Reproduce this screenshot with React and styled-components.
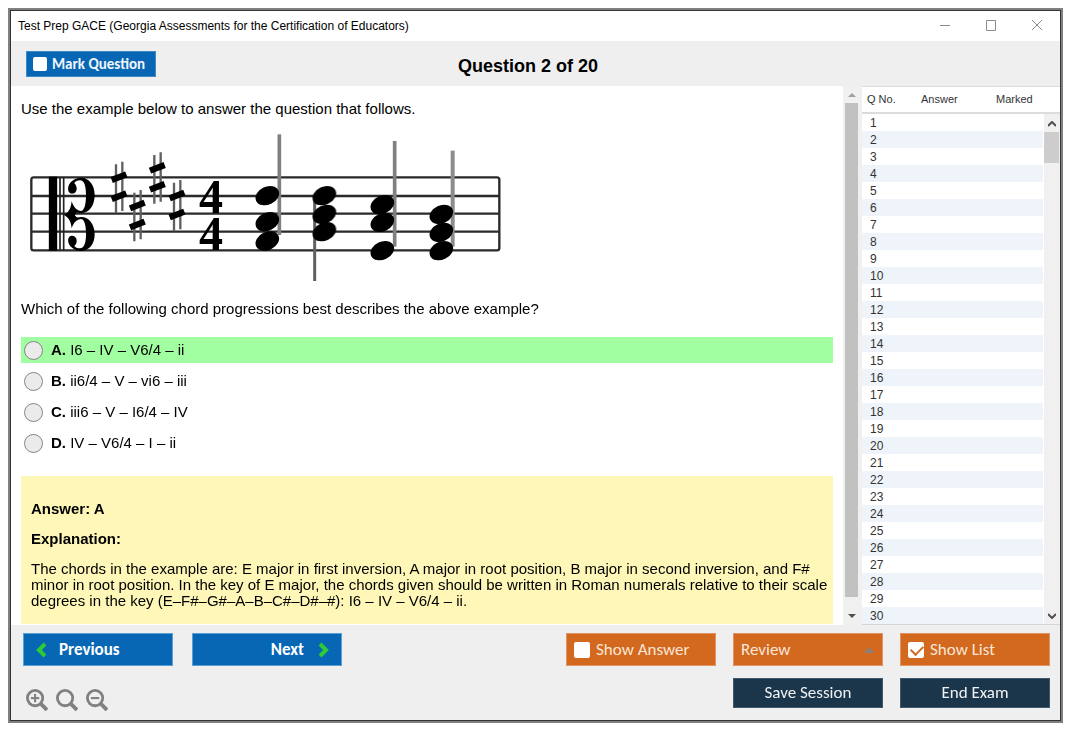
import React from 'react'
import styled, { createGlobalStyle } from "styled-components";

const GlobalStyle = createGlobalStyle`
  * {
    box-sizing: border-box;
  }

  body {
    margin: 0;
    background-color: #ffffff;
    color: #000000;
    font-family: "Liberation Sans", Arial, sans-serif;
    font-size: 15px;
    line-height: 16px;
  }

  button,
  input {
    margin: 0;
    font-family: inherit;
  }
`;

const Page = styled.div`
  display: flex;
  min-height: 100vh;
  padding: 8px 12px 12px 8px;
`;

const AppWindow = styled.div`
  flex: 1;
  min-width: 0;
  display: flex;
  flex-direction: column;
  border: 2px solid #808080;
  outline: 1px solid #333333;
  outline-offset: -3px;
  padding: 1px;
  background-color: #efefef;
`;

const TitleBar = styled.header`
  display: flex;
  align-items: center;
  justify-content: space-between;
  height: 30px;
  padding-left: 7px;
  background-color: #ffffff;
  font-size: 12px;
`;

const WindowButtons = styled.div`
  display: flex;
`;

const WindowButton = styled.button`
  display: flex;
  align-items: center;
  justify-content: center;
  width: 46px;
  height: 28px;
  padding: 0;
  border: 0;
  background: none;
`;

const QuestionBar = styled.div`
  display: grid;
  grid-template-columns: 1fr auto 1fr;
  align-items: center;
  height: 45px;
  padding: 0 30px 0 15px;
`;

const QuestionTitle = styled.h1`
  margin: 0;
  padding-top: 4px;
  font-size: 18px;
  line-height: 20px;
`;

const MarkToggle = styled.label`
  display: flex;
  align-items: center;
  justify-self: start;
  gap: 5px;
  width: 130px;
  height: 26px;
  padding: 0 6px;
  border: 1px solid #3f8ac6;
  background-color: #0867b5;
  color: #f2f6fa;
  font-family: Carlito, Lato, sans-serif;
  font-size: 15px;
  font-weight: 700;
  white-space: nowrap;
`;

const CheckBox = styled.input`
  appearance: none;
  flex: none;
  position: relative;
  width: ${(props) => props.$size}px;
  height: ${(props) => props.$size}px;
  border-radius: 2px;
  background-color: #ffffff;

  &:checked::after {
    content: "";
    position: absolute;
    left: 3px;
    top: 3px;
    width: 10px;
    height: 6px;
    border-left: 2px solid #d2691e;
    border-bottom: 2px solid #d2691e;
    transform: rotate(-45deg);
  }
`;

const Main = styled.main`
  flex: 1;
  display: flex;
  align-items: stretch;
`;

const Content = styled.section`
  flex: 1;
  min-width: 0;
  display: flex;
  flex-direction: column;
  padding: 15px 10px 1px;
  background-color: #ffffff;
`;

const Text = styled.p`
  margin: 0;
`;

const Score = styled.svg`
  display: block;
  width: 500px;
  max-width: 100%;
  height: 165px;
  margin: 8px 0 11px;
`;

const Options = styled.fieldset`
  display: flex;
  flex-direction: column;
  gap: 5px;
  min-width: 0;
  margin: 20px 0;
  padding: 0;
  border: 0;
`;

const Option = styled.label`
  display: flex;
  align-items: center;
  gap: 8px;
  height: 26px;
  padding-left: 3px;
  background-color: ${(props) => (props.$correct ? "#a1ffa1" : "transparent")};
`;

const Radio = styled.input`
  appearance: none;
  width: 19px;
  height: 19px;
  border: 1px solid #858585;
  border-radius: 50%;
  background-color: #ebebeb;

  &:checked {
    box-shadow: inset 0 0 0 4px #ebebeb;
    background-color: #333333;
  }
`;

const AnswerBox = styled.div`
  flex: 1;
  display: flex;
  flex-direction: column;
  gap: 14px;
  padding: 25px 4px 13px 10px;
  background-color: #fef7b8;
`;

const ContentScroll = styled.div`
  display: flex;
  flex-direction: column;
  align-items: center;
  flex: none;
  width: 19px;
  padding: 7px 4px 7px 2px;
  background-color: #f0f0f0;
`;

const ContentThumb = styled.div`
  flex: 1;
  align-self: stretch;
  margin: 6px 0 17px;
  background-color: #c1c1c1;
`;

const ListPanel = styled.aside`
  position: relative;
  flex: none;
  width: 198px;
  border-bottom: 1px solid #d5d5d5;
  background-color: #ffffff;
`;

const ListTable = styled.table`
  width: 100%;
  border-collapse: separate;
  border-spacing: 0;
  table-layout: fixed;
  color: #333333;
  font-size: 12px;
  line-height: 15px;

  th {
    height: 28px;
    padding: 0 0 1px 5px;
    border-top: 1px solid #dcdcdc;
    border-bottom: 2px solid #dcdcdc;
    font-size: 11px;
    font-weight: 400;
    text-align: left;
  }

  td {
    height: 17px;
    padding: 2px 0 0 8px;
  }

  tbody tr:nth-child(even) {
    background-color: #eef4f9;
  }
`;

const ListScroll = styled.div`
  position: absolute;
  top: 28px;
  right: 0;
  bottom: 0;
  display: flex;
  flex-direction: column;
  align-items: center;
  width: 17px;
  border-left: 1px solid #ffffff;
  background-color: #f0f0f0;
`;

const ListThumb = styled.div`
  align-self: stretch;
  height: 31px;
  margin: 5px 1px auto 0;
  background-color: #cdcdcd;
`;

const ScrollArrow = styled.svg`
  display: block;
  flex: none;
  margin: ${(props) => props.$margin || "0"};
`;

const Footer = styled.footer`
  display: flex;
  flex-direction: column;
  gap: 12px;
  padding: 8px 10px 12px 12px;
`;

const FooterRow = styled.div`
  display: flex;
  align-items: flex-start;
  justify-content: space-between;
`;

const ButtonGroup = styled.div`
  display: flex;
  gap: ${(props) => props.$gap || 17}px;
`;

const FooterButton = styled.button`
  display: flex;
  align-items: center;
  justify-content: ${(props) => props.$justify || "center"};
  gap: ${(props) => props.$gap || 6}px;
  width: 150px;
  height: ${(props) => props.$height || 33}px;
  padding: 0 ${(props) => props.$pad || 7}px;
  border: 1px solid ${(props) => props.$border};
  background-color: ${(props) => props.$color};
  color: ${(props) => props.$text || "#ffffff"};
  font-family: Carlito, Lato, sans-serif;
  font-size: 17px;
  font-weight: ${(props) => (props.$bold ? 700 : 400)};
  line-height: 20px;
  white-space: nowrap;
`;

const ZoomTools = styled.div`
  display: flex;
  gap: 8px;
  height: 30px;
  padding: 11px 0 0 3px;
`;

const ZoomButton = styled.button`
  display: flex;
  width: 22px;
  height: 22px;
  padding: 0;
  border: 0;
  background: none;
`;

const BLUE = { $color: "#0867b5", $border: "#5b9fd3", $bold: true };
const ORANGE = { $color: "#d2691e", $border: "#de9561", $text: "#fbe6d8" };
const NAVY = { $color: "#1b354a", $border: "#41586a", $text: "#f0f2f4", $height: 30 };

const options = [
  { letter: "A", text: "I6 – IV – V6/4 – ii", correct: true },
  { letter: "B", text: "ii6/4 – V – vi6 – iii" },
  { letter: "C", text: "iii6 – V – I6/4 – IV" },
  { letter: "D", text: "IV – V6/4 – I – ii" },
];

const rows = Array.from({ length: 30 }, (_, i) => i + 1);

const sharps = [[312, 185], [367, 270], [427, 157], [486, 240]];

// stem: [x, top, bottom, width, color]
const chords = [
  { x: 757, heads: [212, 290, 348], stem: [793, 28, 330, 11, "#808080"] },
  { x: 928, heads: [212, 268, 320], stem: [899, 212, 468, 9, "#606060"] },
  { x: 1102, heads: [239, 292, 377], stem: [1139, 48, 365, 11, "#808080"] },
  { x: 1279, heads: [268, 322, 377], stem: [1313, 77, 365, 12, "#8c8c8c"] },
];

function MusicScore() {
  return (
    <Score viewBox="18 0 1500 495" role="img" aria-label="Four chords on a staff in alto clef">
      <defs>
        <filter id="soft" x="-5%" y="-5%" width="110%" height="110%">
          <feGaussianBlur stdDeviation="2" />
        </filter>
      </defs>
      <g filter="url(#soft)">
        <rect x="49" y="157" width="1404" height="219" rx="7" fill="none" stroke="#2a2a2a" strokeWidth="7" />
        <path d="M49 213H1453M49 266H1453M49 320H1453" stroke="#2a2a2a" strokeWidth="7" />
        <path d="M114 155V377" stroke="#000000" strokeWidth="25" />
        <path d="M135 157V376M146 157V376" stroke="#222222" strokeWidth="5" />
        <path d="M146 270C160 264 168 250 170 228C175 246 186 257 199 258C209 255 213 236 213 210C213 184 208 166 195 166C187 166 180 170 178 175C184 181 187 189 184 197C180 207 167 209 161 200C154 182 170 159 198 158C224 158 239 182 239 209C239 242 222 264 199 264C191 264 187 262 184 264L179 270L184 276C187 279 192 276 199 276C222 276 239 298 239 328C239 355 224 378 198 378C170 377 154 354 161 338C167 329 180 331 184 341C187 349 184 357 178 363C181 368 187 370 195 370C208 370 213 352 213 328C213 301 209 285 199 282C186 283 175 292 170 310C168 288 160 276 146 270Z" fill="#000000" />
        {sharps.map(([x, y]) => (
          <g key={x}>
            <path d={`M${x - 9} ${y - 67}V${y + 79}M${x + 10} ${y - 75}V${y + 73}`} stroke="#606060" strokeWidth="7" />
            <path d={`M${x - 22} ${y - 20}L${x + 22} ${y - 37}M${x - 22} ${y + 37}L${x + 22} ${y + 20}`} stroke="#000000" strokeWidth="19" />
          </g>
        ))}
        <g fontFamily="Liberation Serif, serif" fontSize="144" fontWeight="700" textAnchor="middle">
          <text x="588" y="265">4</text>
          <text x="588" y="376">4</text>
        </g>
        {chords.map(({ x, heads, stem }) => (
          <g key={x}>
            <path d={`M${stem[0]} ${stem[1]}V${stem[2]}`} stroke={stem[4]} strokeWidth={stem[3]} />
            {heads.map((y) => (
              <ellipse key={y} cx={x} cy={y} rx="37" ry="27" transform={`rotate(-25 ${x} ${y})`} />
            ))}
          </g>
        ))}
      </g>
    </Score>
  )
}

function Chevron({ right }) {
  return (
    <svg width="10" height="16" viewBox="0 0 10 16" fill="none" stroke="#2ecc33" strokeWidth="4">
      <path d={right ? "M1 2L7 8L1 14" : "M9 2L3 8L9 14"} />
    </svg>
  )
}

function Magnifier({ sign }) {
  return (
    <svg width="22" height="22" viewBox="0 0 63 63" fill="none" stroke="#808080">
      <circle cx="26" cy="26" r="22" strokeWidth="8" />
      <path d="M42 42L60 60" strokeWidth="11" />
      {sign && <path d="M14 26H38" strokeWidth="6" />}
      {sign === "plus" && <path d="M26 14V38" strokeWidth="6" />}
    </svg>
  )
}

export default function App() {
  return (
    <Page>
      <GlobalStyle />
      <AppWindow>
        <TitleBar>
          <span>Test Prep GACE (Georgia Assessments for the Certification of Educators)</span>
          <WindowButtons>
            <WindowButton aria-label="Minimize">
              <svg width="12" height="12" stroke="#8a8a8a"><path d="M1 5.5H11" /></svg>
            </WindowButton>
            <WindowButton aria-label="Maximize">
              <svg width="12" height="12" stroke="#8a8a8a" fill="none"><path d="M1.5 0.5H10.5V10.5H1.5Z" /></svg>
            </WindowButton>
            <WindowButton aria-label="Close">
              <svg width="12" height="12" stroke="#8a8a8a"><path d="M1 0L11 10M11 0L1 10" /></svg>
            </WindowButton>
          </WindowButtons>
        </TitleBar>

        <QuestionBar>
          <MarkToggle>
            <CheckBox type="checkbox" $size={14} />
            Mark Question
          </MarkToggle>
          <QuestionTitle>Question 2 of 20</QuestionTitle>
        </QuestionBar>

        <Main>
          <Content>
            <Text>Use the example below to answer the question that follows.</Text>
            <MusicScore />
            <Text>Which of the following chord progressions best describes the above example?</Text>
            <Options aria-label="Answers">
              {options.map((option) => (
                <Option key={option.letter} $correct={option.correct}>
                  <Radio type="radio" name="answer" value={option.letter} />
                  <span><b>{option.letter}.</b> {option.text}</span>
                </Option>
              ))}
            </Options>
            <AnswerBox>
              <Text><b>Answer: A</b></Text>
              <Text><b>Explanation:</b></Text>
              <Text>
                The chords in the example are: E major in first inversion, A major in root position, B major in second inversion, and F# minor in root position. In the key of E major, the chords given should be written in Roman numerals relative to their scale degrees in the key (E–F#–G#–A–B–C#–D#–#): I6 – IV – V6/4 – ii.
              </Text>
            </AnswerBox>
          </Content>

          <ContentScroll aria-hidden="true">
            <ScrollArrow width="8" height="4" fill="#a0a0a0"><path d="M0 4L4 0L8 4Z" /></ScrollArrow>
            <ContentThumb />
            <ScrollArrow width="8" height="4" fill="#505050"><path d="M0 0L4 4L8 0Z" /></ScrollArrow>
          </ContentScroll>

          <ListPanel>
            <ListTable>
              <colgroup>
                <col width="54" />
                <col width="75" />
                <col />
              </colgroup>
              <thead>
                <tr>
                  <th scope="col">Q No.</th>
                  <th scope="col">Answer</th>
                  <th scope="col">Marked</th>
                </tr>
              </thead>
              <tbody>
                {rows.map((n) => (
                  <tr key={n}>
                    <td>{n}</td>
                    <td />
                    <td />
                  </tr>
                ))}
              </tbody>
            </ListTable>
            <ListScroll aria-hidden="true">
              <ScrollArrow $margin="7px 0 0" width="8" height="6" fill="none" stroke="#505050" strokeWidth="2"><path d="M0 5L4 1L8 5" /></ScrollArrow>
              <ListThumb />
              <ScrollArrow $margin="0 0 5px" width="8" height="6" fill="none" stroke="#505050" strokeWidth="2"><path d="M0 1L4 5L8 1" /></ScrollArrow>
            </ListScroll>
          </ListPanel>
        </Main>

        <Footer>
          <FooterRow>
            <ButtonGroup $gap={19}>
              <FooterButton {...BLUE} $justify="flex-start" $gap={13} $pad={12}>
                <Chevron />
                Previous
              </FooterButton>
              <FooterButton {...BLUE} $justify="flex-end" $gap={15} $pad={12}>
                Next
                <Chevron right />
              </FooterButton>
            </ButtonGroup>
            <ButtonGroup>
              <FooterButton as="label" {...ORANGE} $justify="flex-start">
                <CheckBox type="checkbox" $size={16} />
                Show Answer
              </FooterButton>
              <FooterButton {...ORANGE} $justify="space-between" aria-haspopup="menu">
                Review
                <svg width="12" height="6" fill="#8a8078"><path d="M1 6L6 0L11 6Z" /></svg>
              </FooterButton>
              <FooterButton as="label" {...ORANGE} $justify="flex-start">
                <CheckBox type="checkbox" $size={16} defaultChecked />
                Show List
              </FooterButton>
            </ButtonGroup>
          </FooterRow>
          <FooterRow>
            <ZoomTools>
              <ZoomButton aria-label="Zoom in"><Magnifier sign="plus" /></ZoomButton>
              <ZoomButton aria-label="Reset zoom"><Magnifier /></ZoomButton>
              <ZoomButton aria-label="Zoom out"><Magnifier sign="minus" /></ZoomButton>
            </ZoomTools>
            <ButtonGroup>
              <FooterButton {...NAVY}>Save Session</FooterButton>
              <FooterButton {...NAVY}>End Exam</FooterButton>
            </ButtonGroup>
          </FooterRow>
        </Footer>
      </AppWindow>
    </Page>
  )
}
